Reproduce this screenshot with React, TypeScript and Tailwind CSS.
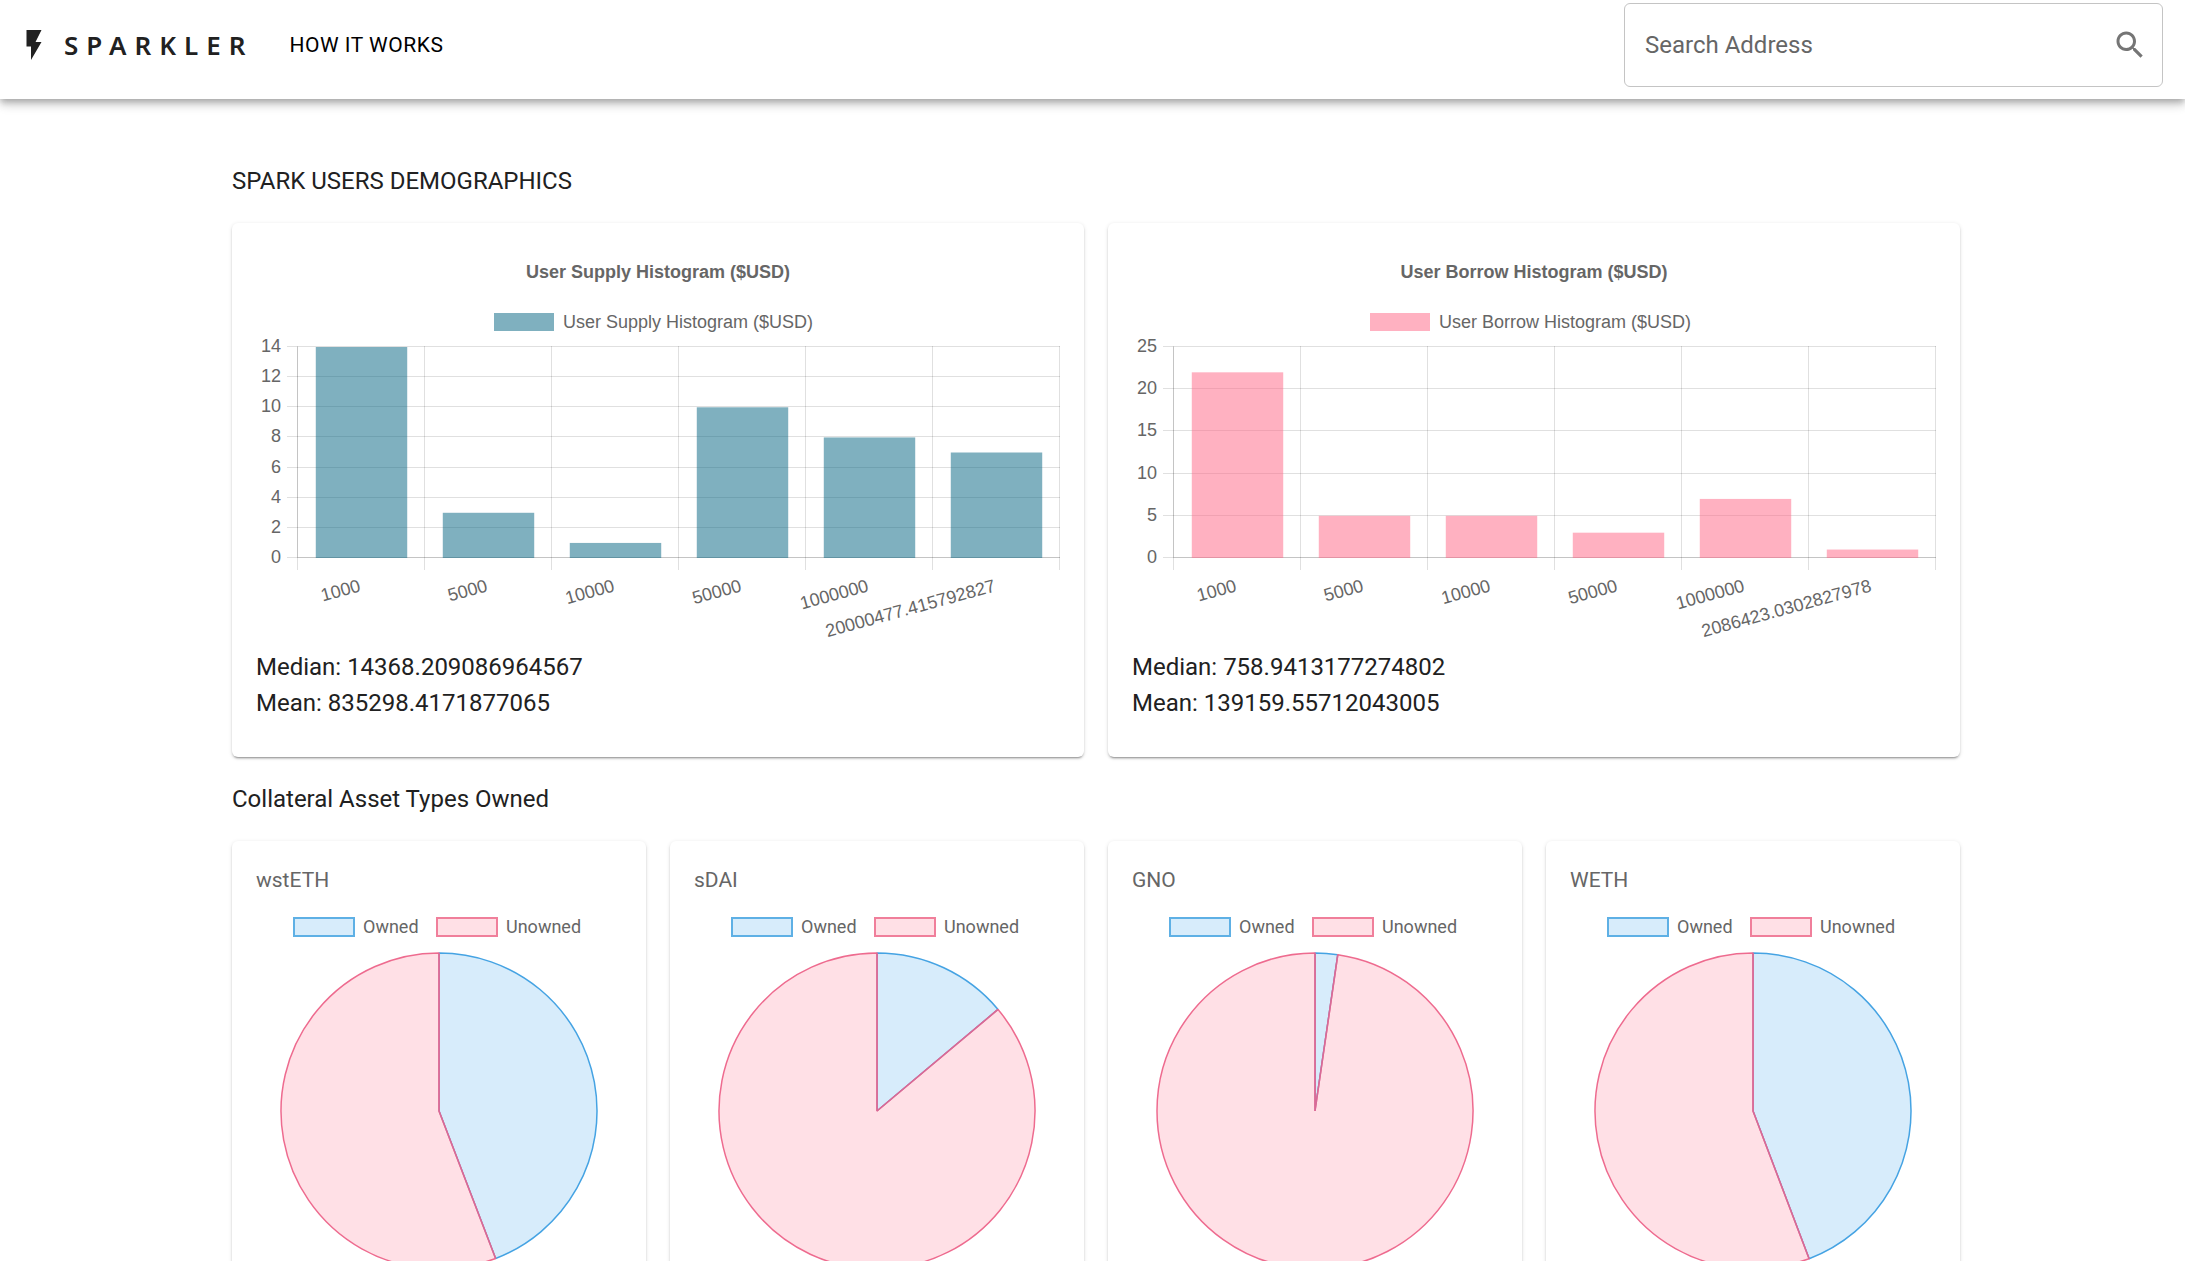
import React from "react";

type Histogram = {
  title: string;
  color: string;
  max: number;
  step: number;
  labels: string[];
  values: number[];
  median: string;
  mean: string;
};

const histograms: Histogram[] = [
  {
    title: "User Supply Histogram ($USD)",
    color: "rgba(0, 97, 127, 0.5)",
    max: 14,
    step: 2,
    labels: ["1000", "5000", "10000", "50000", "1000000", "20000477.415792827"],
    values: [14, 3, 1, 10, 8, 7],
    median: "14368.209086964567",
    mean: "835298.4171877065",
  },
  {
    title: "User Borrow Histogram ($USD)",
    color: "rgba(255, 99, 132, 0.5)",
    max: 25,
    step: 5,
    labels: ["1000", "5000", "10000", "50000", "1000000", "2086423.0302827978"],
    values: [22, 5, 5, 3, 7, 1],
    median: "758.9413177274802",
    mean: "139159.55712043005",
  },
];

const assets = [
  { name: "wstETH", degrees: 159 },
  { name: "sDAI", degrees: 50 },
  { name: "GNO", degrees: 8.3 },
  { name: "WETH", degrees: 159.2 },
];

const PLOT = { left: 42, right: 804, top: 100, bottom: 311 };

function BarChart({ data }: { data: Histogram }) {
  const column = (PLOT.right - PLOT.left) / data.values.length;
  const yOf = (v: number) =>
    PLOT.bottom - (v / data.max) * (PLOT.bottom - PLOT.top);
  const ticks = Array.from(
    { length: Math.floor(data.max / data.step) + 1 },
    (_, i) => i * data.step,
  );
  return (
    <svg
      viewBox="0 0 804 402"
      role="img"
      aria-label={data.title}
      className="block w-full font-['Liberation_Sans',Arial,sans-serif] text-[18px]"
      fill="#666666"
    >
      <text x="402" y="31" textAnchor="middle" fontWeight="700">
        {data.title}
      </text>
      <rect x="238" y="66" width="60" height="18" fill={data.color} />
      <text x="307" y="81">
        {data.title}
      </text>
      <g shapeRendering="crispEdges" fill="#000000" fillOpacity="0.12">
        {ticks.map((t) => (
          <rect
            key={t}
            x="31"
            y={Math.round(yOf(t)) - 1}
            width={PLOT.right - 31}
            height="1"
          />
        ))}
        {Array.from({ length: data.values.length + 1 }, (_, i) => (
          <rect
            key={i}
            x={Math.round(PLOT.left + i * column) - 1}
            y={PLOT.top - 1}
            width="1"
            height={PLOT.bottom + 13 - PLOT.top}
          />
        ))}
        <rect x={PLOT.left - 1} y={PLOT.top} width="1" height={PLOT.bottom - PLOT.top} />
        <rect x={PLOT.left} y={PLOT.bottom - 1} width={PLOT.right - PLOT.left} height="1" />
      </g>
      {ticks.map((t) => (
        <text key={t} x="25" y={yOf(t) + 5} textAnchor="end">
          {t}
        </text>
      ))}
      {data.values.map((v, i) => (
        <rect
          key={i}
          x={PLOT.left + i * column + column * 0.14}
          y={yOf(v)}
          width={column * 0.72}
          height={PLOT.bottom - yOf(v)}
          fill={data.color}
        />
      ))}
      {data.labels.map((label, i) => {
        const x = PLOT.left + (i + 0.5) * column;
        return (
          <text
            key={label}
            x={x}
            y="344"
            textAnchor="end"
            transform={`rotate(-15.3 ${x} 344)`}
          >
            {label}
          </text>
        );
      })}
    </svg>
  );
}

function PieChart({ name, degrees }: { name: string; degrees: number }) {
  const cx = 183;
  const cy = 208;
  const r = 158;
  const a = (degrees * Math.PI) / 180;
  const ex = cx + r * Math.sin(a);
  const ey = cy - r * Math.cos(a);
  return (
    <svg
      viewBox="0 0 366 366"
      role="img"
      aria-label={`${name}: owned and unowned share`}
      className="block w-full font-[Roboto,sans-serif] text-[18px]"
      fill="#666666"
    >
      <g strokeWidth="2">
        <rect x="38" y="15" width="60" height="18" fill="#d7ecfb" stroke="#5eb0e5" />
        <rect x="181" y="15" width="60" height="18" fill="#ffe0e6" stroke="#f07f9b" />
      </g>
      <text x="107" y="30">
        Owned
      </text>
      <text x="250" y="30">
        Unowned
      </text>
      <g strokeWidth="1.5" strokeLinejoin="bevel">
        <path
          d={`M${cx} ${cy}V${cy - r}A${r} ${r} 0 0 1 ${ex} ${ey}Z`}
          fill="#d7ecfb"
          stroke="#45a3e3"
        />
        <path
          d={`M${cx} ${cy}L${ex} ${ey}A${r} ${r} 0 1 1 ${cx} ${cy - r}Z`}
          fill="#ffe0e6"
          stroke="#ee6b8f"
        />
        <path
          d={`M${cx} ${cy - r}V${cy}L${ex} ${ey}`}
          fill="none"
          stroke="#d66b98"
        />
      </g>
    </svg>
  );
}

function Card({ children }: { children: React.ReactNode }) {
  return (
    <article className="rounded-md bg-white px-6 pt-6 pb-9 shadow-[0_3px_1px_-2px_rgba(0,0,0,0.2),0_2px_2px_0_rgba(0,0,0,0.14),0_1px_4px_0_rgba(0,0,0,0.12)]">
      {children}
    </article>
  );
}

export default function App() {
  return (
    <div className="min-h-screen bg-white font-[Roboto,sans-serif] text-[#212121]">
      <header className="relative flex items-center bg-white pt-[3px] pr-[22px] pb-3 pl-4 shadow-[0_3px_6px_-1px_rgba(0,0,0,0.2),0_6px_8px_0_rgba(0,0,0,0.14),0_2px_15px_0_rgba(0,0,0,0.12)]">
        <a href="#" className="flex items-center gap-3">
          <svg viewBox="0 0 24 24" className="size-9" fill="currentColor" aria-hidden="true">
            <path d="M7 2v11h3v9l7-12h-4l4-8z" />
          </svg>
          <span className="font-['Noto_Sans',sans-serif] text-[26px] leading-9 font-semibold tracking-[8px]">
            SPARKLER
          </span>
        </a>
        <nav className="ml-9">
          <a href="#how" className="text-[21px] leading-9 tracking-wide text-black">
            HOW IT WORKS
          </a>
        </nav>
        <form
          role="search"
          className="ml-auto flex h-[84px] w-[539px] items-center rounded-md border border-[#c4c4c4] pr-[14px] pl-5"
        >
          <input
            type="text"
            aria-label="Search Address"
            placeholder="Search Address"
            className="min-w-0 flex-1 bg-transparent text-2xl outline-none placeholder:text-[#666666]"
          />
          <button type="submit" aria-label="Search" className="text-[#757575]">
            <svg viewBox="0 0 24 24" className="size-9" fill="currentColor" aria-hidden="true">
              <path d="M15.5 14h-.79l-.28-.27C15.41 12.59 16 11.11 16 9.5 16 5.91 13.09 3 9.5 3S3 5.91 3 9.5 5.91 16 9.5 16c1.61 0 3.09-.59 4.23-1.57l.27.28v.79l5 4.99L20.49 19l-4.99-5zm-6 0C7.01 14 5 11.99 5 9.5S7.01 5 9.5 5 14 7.01 14 9.5 11.99 14 9.5 14z" />
            </svg>
          </button>
        </form>
      </header>

      <main className="mx-auto flex max-w-[1807px] flex-col gap-6 pt-16 pr-9 pb-9 pl-[43px]">
        <h1 className="text-2xl leading-9">SPARK USERS DEMOGRAPHICS</h1>
        <section className="grid grid-cols-2 gap-6">
          {histograms.map((h) => (
            <Card key={h.title}>
              <BarChart data={h} />
              <p className="text-2xl leading-9">Median: {h.median}</p>
              <p className="text-2xl leading-9">Mean: {h.mean}</p>
            </Card>
          ))}
        </section>
        <h2 className="text-2xl leading-9">Collateral Asset Types Owned</h2>
        <section className="grid grid-cols-4 gap-6">
          {assets.map((a) => (
            <Card key={a.name}>
              <h3 className="mb-2 text-[21px] leading-[30px] text-[#666666]">{a.name}</h3>
              <PieChart name={a.name} degrees={a.degrees} />
            </Card>
          ))}
        </section>
      </main>
    </div>
  );
}
